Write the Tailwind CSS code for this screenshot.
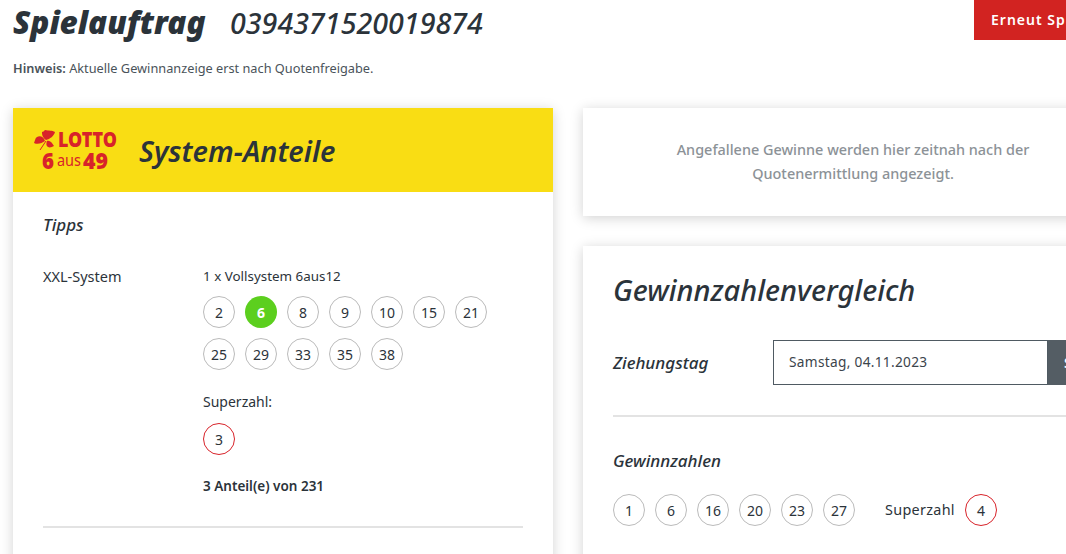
<!DOCTYPE html>
<html lang="de">
<head>
<meta charset="utf-8">
<script src="https://cdn.jsdelivr.net/npm/@tailwindcss/browser@4"></script>
</head>
<body class="bg-white">
<div class="w-[1066px] h-[554px] overflow-hidden font-['Noto_Sans','Open_Sans',sans-serif] text-[#2b333a]">
  <div class="w-[1136px] px-[13px]">
    <header class="flex justify-between items-start h-[108px]">
      <div>
        <div class="flex items-baseline gap-[25px] h-[48px]">
          <h1 class="w-[192px] text-[31.5px] leading-[44px] font-black italic whitespace-nowrap">Spielauftrag</h1>
          <span class="text-[28.7px] leading-[44px] font-medium italic">0394371520019874</span>
        </div>
        <p class="mt-[11px] text-[12.75px] leading-[18px] text-[#4a535a]"><b class="font-semibold">Hinweis:</b> Aktuelle Gewinnanzeige erst nach Quotenfreigabe.</p>
      </div>
      <a class="w-[149px] h-[40px] bg-[#d22321] text-white text-[14px] leading-[40px] font-semibold tracking-[1px] pl-[17px] whitespace-nowrap">Erneut Spielen</a>
    </header>
    <div class="flex gap-[30px] items-start">
      <section class="w-[540px] bg-white shadow-[0_2px_12px_rgba(0,0,0,0.18)]">
        <div class="h-[84px] bg-[#f9dd14] flex items-center pl-[21px] gap-[17px]">
          <svg width="88" height="44" viewBox="0 0 88 44" class="shrink-0">
            <path fill="#d8232a" d="M12 12 C8 9 8 6 8 4 C9 4 10 3 11 2 C15 3 18 2 21 4 C20 8 16 11 12 12 Z M11 13 C8 15 4 17 0 15 C1 13 1 10 3 9 C6 7 10 9 11 13 Z M13 13 C16 12 18 15 20 18 C18 19 16 20 14 19 C12 18 12 15 13 13 Z"/>
            <path stroke="#d8232a" stroke-width="1" fill="none" d="M12 13 L6 22"/>
            <text x="24" y="19" fill="#d8232a" font-size="21" font-weight="900" font-family="Noto Sans" textLength="59" lengthAdjust="spacingAndGlyphs">LOTTO</text>
            <text x="8" y="41" fill="#d8232a" font-size="22" font-weight="900" font-family="Noto Sans" textLength="12" lengthAdjust="spacingAndGlyphs">6</text>
            <text x="23" y="38" fill="#d8232a" font-size="17" font-family="Noto Sans" textLength="24" lengthAdjust="spacingAndGlyphs">aus</text>
            <text x="49" y="41" fill="#d8232a" font-size="22" font-weight="900" font-family="Noto Sans" textLength="25" lengthAdjust="spacingAndGlyphs">49</text>
          </svg>
          <h2 class="text-[28.8px] font-semibold italic leading-[36px] pt-[2px]">System-Anteile</h2>
        </div>
        <div class="px-[30px] pt-[21px] h-[400px]">
          <h3 class="text-[17px] leading-[24px] font-medium italic">Tipps</h3>
          <div class="flex mt-[29px]">
            <div class="w-[160px] text-[14.5px] leading-[20px]">XXL-System</div>
            <div class="w-[320px]">
              <div class="text-[13.4px] leading-[20px]">1 x Vollsystem 6aus12</div>
              <div class="flex flex-wrap gap-[10px] mt-[10px] w-[294px] text-[14px]">
                <span class="size-[32px] rounded-full border border-[#bbb] flex items-center justify-center">2</span>
                <span class="size-[32px] rounded-full bg-[#5ccf1e] text-white font-bold flex items-center justify-center">6</span>
                <span class="size-[32px] rounded-full border border-[#bbb] flex items-center justify-center">8</span>
                <span class="size-[32px] rounded-full border border-[#bbb] flex items-center justify-center">9</span>
                <span class="size-[32px] rounded-full border border-[#bbb] flex items-center justify-center">10</span>
                <span class="size-[32px] rounded-full border border-[#bbb] flex items-center justify-center">15</span>
                <span class="size-[32px] rounded-full border border-[#bbb] flex items-center justify-center">21</span>
                <span class="size-[32px] rounded-full border border-[#bbb] flex items-center justify-center">25</span>
                <span class="size-[32px] rounded-full border border-[#bbb] flex items-center justify-center">29</span>
                <span class="size-[32px] rounded-full border border-[#bbb] flex items-center justify-center">33</span>
                <span class="size-[32px] rounded-full border border-[#bbb] flex items-center justify-center">35</span>
                <span class="size-[32px] rounded-full border border-[#bbb] flex items-center justify-center">38</span>
              </div>
              <div class="text-[14px] leading-[20px] mt-[22px]">Superzahl:</div>
              <div class="flex mt-[11px] text-[14px]">
                <span class="size-[32px] rounded-full border border-[#d8232a] flex items-center justify-center">3</span>
              </div>
              <div class="text-[13.5px] leading-[20px] font-semibold mt-[21px]">3 Anteil(e) von 231</div>
            </div>
          </div>
          <hr class="mt-[30px] border-0 h-[2px] bg-[#e3e3e3]">
        </div>
      </section>
      <div class="w-[540px] flex flex-col gap-[30px]">
        <section class="h-[108px] bg-white shadow-[0_2px_12px_rgba(0,0,0,0.18)] flex items-center justify-center text-center">
          <p class="w-[420px] text-[14.45px] leading-[24px] font-medium text-[#8c9297]">Angefallene Gewinne werden hier zeitnah nach der Quotenermittlung angezeigt.</p>
        </section>
        <section class="bg-white shadow-[0_2px_12px_rgba(0,0,0,0.18)] px-[30px] pt-[24px] h-[400px]">
          <h2 class="text-[29px] leading-[40px] font-medium italic">Gewinnzahlenvergleich</h2>
          <div class="flex items-center mt-[30px]">
            <div class="w-[160px] shrink-0 text-[17px] font-medium italic">Ziehungstag</div>
            <div class="flex h-[45px] grow">
              <div class="w-[275px] shrink-0 border border-[#4f5a62] flex items-center pl-[15px] text-[13.7px] tracking-[0.3px] text-[#3b444b]">Samstag, 04.11.2023</div>
              <div class="grow bg-[#545d64] text-white text-[14px] font-semibold flex items-center pl-[16px]">Suchen</div>
            </div>
          </div>
          <hr class="mt-[30px] border-0 h-[2px] bg-[#e3e3e3]">
          <h3 class="mt-[32px] text-[17px] leading-[24px] font-medium italic">Gewinnzahlen</h3>
          <div class="flex items-center mt-[21px] text-[14px]">
            <div class="flex gap-[10px]">
              <span class="size-[32px] rounded-full border border-[#bbb] flex items-center justify-center">1</span>
              <span class="size-[32px] rounded-full border border-[#bbb] flex items-center justify-center">6</span>
              <span class="size-[32px] rounded-full border border-[#bbb] flex items-center justify-center">16</span>
              <span class="size-[32px] rounded-full border border-[#bbb] flex items-center justify-center">20</span>
              <span class="size-[32px] rounded-full border border-[#bbb] flex items-center justify-center">23</span>
              <span class="size-[32px] rounded-full border border-[#bbb] flex items-center justify-center">27</span>
            </div>
            <span class="ml-[30px] w-[80px] text-[14.4px] tracking-[0.3px]">Superzahl</span>
            <span class="size-[32px] rounded-full border border-[#d8232a] flex items-center justify-center">4</span>
          </div>
        </section>
      </div>
    </div>
  </div>
</div>
</body>
</html>
